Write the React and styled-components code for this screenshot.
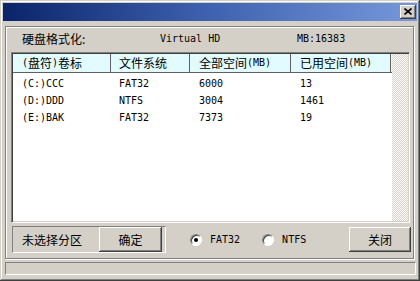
import styled, { createGlobalStyle } from "styled-components";

const GlobalStyle = createGlobalStyle`
  html, body {
    margin: 0;
    padding: 0;
    background: #d4d0c8;
  }
  body {
    font-family: "DejaVu Sans Mono", "Noto Sans CJK SC", monospace;
    font-size: 10px;
    color: #000;
  }
`;

const drives = [
  { label: "(C:)CCC", fs: "FAT32", total: 6000, used: 13 },
  { label: "(D:)DDD", fs: "NTFS", total: 3004, used: 1461 },
  { label: "(E:)BAK", fs: "FAT32", total: 7373, used: 19 },
];

const App = () => {
  return (
    <>
      <GlobalStyle />
      <Window>
        <TitleBar>
          <CloseButton>
            <svg width="8" height="7" viewBox="0 0 8 7">
              <path d="M0.5 0.5 L7.5 6.5 M7.5 0.5 L0.5 6.5" stroke="#000" strokeWidth="1.6" />
            </svg>
          </CloseButton>
        </TitleBar>

        <GroupBox>
          <InfoRow>
            <Cn>硬盘格式化:</Cn>
            <span>Virtual HD</span>
            <span>MB:16383</span>
          </InfoRow>

          <ListView>
            <ListBody>
              <HeaderRow>
                <HeaderCell>
                  (<Cn>盘符</Cn>)<Cn>卷标</Cn>
                </HeaderCell>
                <HeaderCell>
                  <Cn>文件系统</Cn>
                </HeaderCell>
                <HeaderCell>
                  <Cn>全部空间</Cn>(MB)
                </HeaderCell>
                <HeaderCell>
                  <Cn>已用空间</Cn>(MB)
                </HeaderCell>
              </HeaderRow>
              <Rows>
                {drives.map((d) => (
                  <Row key={d.label}>
                    <Cell>{d.label}</Cell>
                    <Cell>{d.fs}</Cell>
                    <Cell>{d.total}</Cell>
                    <Cell>{d.used}</Cell>
                  </Row>
                ))}
              </Rows>
            </ListBody>
            <ScrollTrack />
          </ListView>

          <BottomRow>
            <StatusPanel>
              <Cn>未选择分区</Cn>
              <Button $w={63}>确定</Button>
            </StatusPanel>
            <RadioGroup>
              <RadioItem>
                <RadioCircle $checked />
                FAT32
              </RadioItem>
              <RadioItem>
                <RadioCircle />
                NTFS
              </RadioItem>
            </RadioGroup>
            <Button $w={62} $push>
              关闭
            </Button>
          </BottomRow>
        </GroupBox>

        <StatusBar />
      </Window>
    </>
  );
};

export default App;

const Window = styled.div`
  width: 420px;
  height: 281px;
  box-sizing: border-box;
  padding: 3px;
  background: #d4d0c8;
  box-shadow: inset -1px -1px #404040, inset 1px 1px #d4d0c8,
    inset -2px -2px #808080, inset 2px 2px #fff;
  display: flex;
  flex-direction: column;
`;

const TitleBar = styled.div`
  height: 18px;
  background: linear-gradient(90deg, #0a246a 0%, #3f62b0 50%, #7698dc 100%);
  display: flex;
  justify-content: flex-end;
  align-items: flex-start;
  padding: 2px 1px 0 0;
  box-sizing: border-box;
`;

const CloseButton = styled.div`
  width: 16px;
  height: 14px;
  box-sizing: border-box;
  background: #d4d0c8;
  box-shadow: inset -1px -1px #404040, inset 1px 1px #fff,
    inset -2px -2px #808080;
  display: flex;
  align-items: center;
  justify-content: center;
  padding-bottom: 1px;
`;

const Cn = styled.span`
  font-family: "Noto Sans CJK SC", sans-serif;
  font-size: 12px;
`;

const GroupBox = styled.div`
  margin: 5px 3px 0 2px;
  height: 233px;
  box-sizing: border-box;
  border: 1px solid #808080;
  box-shadow: inset 1px 1px #fff, 1px 1px #fff;
  display: flex;
  flex-direction: column;
  padding: 0 0 5px 0;
`;

const InfoRow = styled.div`
  height: 25px;
  box-sizing: border-box;
  padding: 0 0 2px 16px;
  display: grid;
  grid-template-columns: 138px 137px auto;
  align-items: center;
  line-height: 14px;
`;

const ListView = styled.div`
  margin: 0 3px 0 5px;
  height: 171px;
  box-sizing: border-box;
  border: 1px solid;
  border-color: #808080 #fff #fff #808080;
  box-shadow: inset 1px 1px #404040, inset -1px -1px #d4d0c8;
  padding: 1px;
  display: flex;
`;

const ListBody = styled.div`
  flex: 1;
  background: #fff;
  display: flex;
  flex-direction: column;
`;

const HeaderRow = styled.div`
  display: grid;
  grid-template-columns: 98px 79px 101px 100px;
  height: 19px;
  box-sizing: border-box;
  background: #e1fbff;
  border-bottom: 1px solid #606060;
`;

const HeaderCell = styled.div`
  padding-left: 9px;
  border-right: 1px solid #606060;
  display: flex;
  align-items: center;
  line-height: 14px;
  &:nth-child(2) {
    padding-left: 8px;
  }
`;

const Rows = styled.div`
  padding-top: 2px;
`;

const Row = styled.div`
  display: grid;
  grid-template-columns: 98px 79px 101px 100px;
  height: 17px;
  align-items: center;
`;

const Cell = styled.div`
  padding-left: 9px;
  &:nth-child(2) {
    padding-left: 8px;
  }
`;

const ScrollTrack = styled.div`
  width: 16px;
  background-color: #fff;
  background-image: repeating-conic-gradient(#d4d0c8 0 25%, #fff 0 50%);
  background-size: 2px 2px;
`;

const BottomRow = styled.div`
  margin-top: 3px;
  height: 27px;
  display: flex;
  align-items: center;
  padding: 0 2px 0 6px;
`;

const StatusPanel = styled.div`
  width: 154px;
  height: 27px;
  box-sizing: border-box;
  border: 1px solid;
  border-color: #808080 #fff #fff #808080;
  display: flex;
  align-items: center;
  justify-content: space-between;
  padding: 0 3px 0 9px;
`;

const Button = styled.div`
  width: ${(p) => p.$w}px;
  height: 25px;
  box-sizing: border-box;
  margin-left: ${(p) => (p.$push ? "auto" : "0")};
  background: #d4d0c8;
  box-shadow: inset -1px -1px #404040, inset 1px 1px #fff,
    inset -2px -2px #808080;
  display: flex;
  align-items: center;
  justify-content: center;
  font-family: "Noto Sans CJK SC", sans-serif;
  font-size: 12px;
`;

const RadioGroup = styled.div`
  display: flex;
  align-items: center;
  gap: 22px;
  margin-left: 24px;
`;

const RadioItem = styled.div`
  display: flex;
  align-items: center;
  gap: 8px;
`;

const RadioCircle = styled.span`
  width: 12px;
  height: 12px;
  box-sizing: border-box;
  border-radius: 50%;
  background: #fff;
  border: 1px solid;
  border-color: #808080 #fff #fff #808080;
  box-shadow: inset 1px 1px #404040;
  position: relative;
  &::after {
    content: "";
    display: ${(p) => (p.$checked ? "block" : "none")};
    position: absolute;
    left: 3px;
    top: 3px;
    width: 4px;
    height: 4px;
    border-radius: 50%;
    background: #000;
  }
`;

const StatusBar = styled.div`
  margin: 3px 1px 0 2px;
  height: 13px;
  box-sizing: border-box;
  border: 1px solid;
  border-color: #808080 #fff #fff #808080;
`;
